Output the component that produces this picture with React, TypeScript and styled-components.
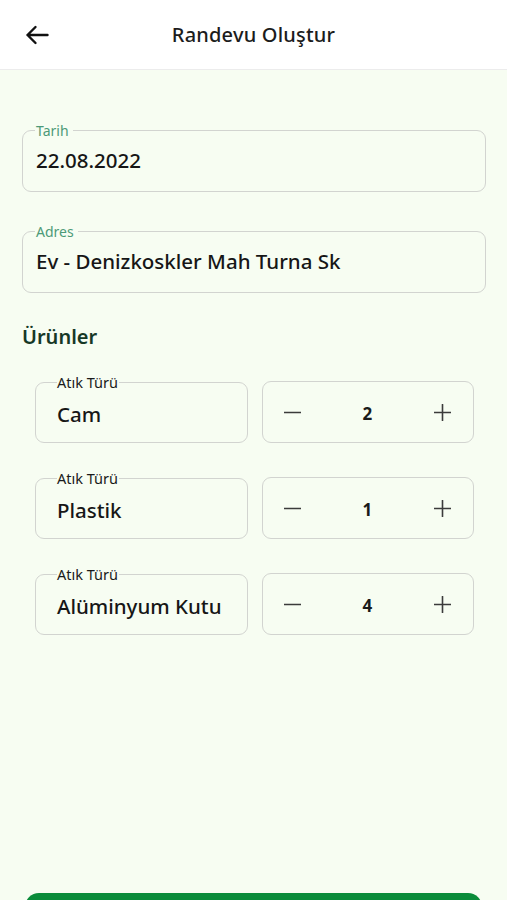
import React from "react";
import styled, { createGlobalStyle } from "styled-components";

const GlobalStyle = createGlobalStyle`
  html, body {
    margin: 0;
    padding: 0;
    background: #f7fdf2;
  }
  * {
    box-sizing: border-box;
  }
`;

const FONT = `"Noto Sans", "Open Sans", sans-serif`;

type Product = { name: string; count: number };

const products: Product[] = [
  { name: "Cam", count: 2 },
  { name: "Plastik", count: 1 },
  { name: "Alüminyum Kutu", count: 4 },
];

const BackIcon = () => (
  <svg width="24" height="20" viewBox="0 0 24 20" fill="none">
    <path
      d="M22.5 10H2.5M10.5 2L2.5 10L10.5 18"
      stroke="#111"
      strokeWidth="2.4"
      strokeLinecap="round"
      strokeLinejoin="round"
    />
  </svg>
);

const MinusIcon = () => (
  <svg width="17" height="17" viewBox="0 0 17 17" fill="none">
    <path d="M0.5 8.5H16.5" stroke="#3b3b3b" strokeWidth="1.6" strokeLinecap="round" />
  </svg>
);

const PlusIcon = () => (
  <svg width="17" height="17" viewBox="0 0 17 17" fill="none">
    <path d="M0.5 8.5H16.5M8.5 0.5V16.5" stroke="#3b3b3b" strokeWidth="1.6" strokeLinecap="round" />
  </svg>
);

const App = () => {
  return (
    <>
      <GlobalStyle />
      <S.Page>
        <S.Header>
          <S.BackButton aria-label="Geri">
            <BackIcon />
          </S.BackButton>
          <S.Title>Randevu Oluştur</S.Title>
        </S.Header>

        <S.Content>
          <S.Field>
            <S.Legend>Tarih</S.Legend>
            <S.Value>22.08.2022</S.Value>
          </S.Field>
          <S.Field>
            <S.Legend>Adres</S.Legend>
            <S.Value>Ev - Denizkoskler Mah Turna Sk</S.Value>
          </S.Field>

          <S.SectionTitle>Ürünler</S.SectionTitle>

          <S.ProductList>
            {products.map((p) => (
              <S.ProductRow key={p.name}>
                <S.ProductField>
                  <S.ProductLegend>Atık Türü</S.ProductLegend>
                  <S.ProductValue>{p.name}</S.ProductValue>
                </S.ProductField>
                <S.Stepper>
                  <S.StepButton aria-label="Azalt">
                    <MinusIcon />
                  </S.StepButton>
                  <S.Count>{p.count}</S.Count>
                  <S.StepButton aria-label="Arttır">
                    <PlusIcon />
                  </S.StepButton>
                </S.Stepper>
              </S.ProductRow>
            ))}
          </S.ProductList>
        </S.Content>

        <S.Footer>
          <S.SubmitButton>Randevu Oluştur</S.SubmitButton>
        </S.Footer>
      </S.Page>
    </>
  );
};

const S = {
  Page: styled.div`
    display: flex;
    flex-direction: column;
    font-family: ${FONT};
    color: #161616;
    background: #f7fdf2;
  `,
  Header: styled.header`
    height: 70px;
    background: #ffffff;
    border-bottom: 1px solid #ececec;
    display: grid;
    grid-template-columns: 70px 1fr 70px;
    align-items: center;
  `,
  BackButton: styled.button`
    border: none;
    background: none;
    padding: 0 0 0 25px;
    height: 100%;
    display: flex;
    align-items: center;
    cursor: pointer;
  `,
  Title: styled.h1`
    margin: 0;
    text-align: center;
    font-size: 20px;
    font-weight: 500;
    color: #1c1c1c;
    letter-spacing: 0.2px;
  `,
  Content: styled.main`
    padding: 52px 21px 0 22px;
    display: flex;
    flex-direction: column;
  `,
  Field: styled.fieldset`
    margin: 0 0 31px;
    padding: 0 12px 12px 13px;
    min-height: 70px;
    border: 1.5px solid #d2d4d0;
    border-radius: 9px;
  `,
  Legend: styled.legend`
    padding: 0 4px 0 1px;
    margin-left: -1px;
    font-size: 14px;
    line-height: 17px;
    color: #4d9a78;
  `,
  Value: styled.div`
    font-size: 20.5px;
    line-height: 26px;
    font-weight: 500;
    margin-top: 8px;
  `,
  SectionTitle: styled.h2`
    margin: -1px 0 0;
    font-size: 20px;
    font-weight: 600;
    color: #163826;
  `,
  ProductList: styled.div`
    display: flex;
    flex-direction: column;
    gap: 27px;
    padding: 24px 12px 0 13px;
  `,
  ProductRow: styled.div`
    display: grid;
    grid-template-columns: 1fr 1fr;
    gap: 14px;
    align-items: end;
  `,
  ProductField: styled.fieldset`
    margin: 0;
    padding: 0 6px 13px 21px;
    height: 69px;
    border: 1.5px solid #d2d4d0;
    border-radius: 9px;
    min-width: 0;
  `,
  ProductLegend: styled.legend`
    padding: 0 1px 0 0;
    font-size: 14.5px;
    line-height: 16px;
    color: #1a1a1a;
  `,
  ProductValue: styled.div`
    font-size: 20.5px;
    line-height: 26px;
    font-weight: 500;
    margin-top: 11px;
    white-space: nowrap;
  `,
  Stepper: styled.div`
    height: 62px;
    border: 1.5px solid #d2d4d0;
    border-radius: 9px;
    display: flex;
    align-items: center;
    justify-content: space-between;
    padding: 0 22px 0 21px;
  `,
  StepButton: styled.button`
    border: none;
    background: none;
    padding: 0;
    display: flex;
    cursor: pointer;
  `,
  Count: styled.span`
    font-size: 17px;
    font-weight: 700;
    color: #1a1a1a;
    padding-top: 2px;
  `,
  Footer: styled.footer`
    padding: 258px 25px 24px 25px;
  `,
  SubmitButton: styled.button`
    width: 100%;
    height: 58px;
    border: none;
    border-radius: 14px;
    background: #0a8c3a;
    color: #ffffff;
    font-family: ${FONT};
    font-size: 18px;
    font-weight: 600;
  `,
};

export default App;
